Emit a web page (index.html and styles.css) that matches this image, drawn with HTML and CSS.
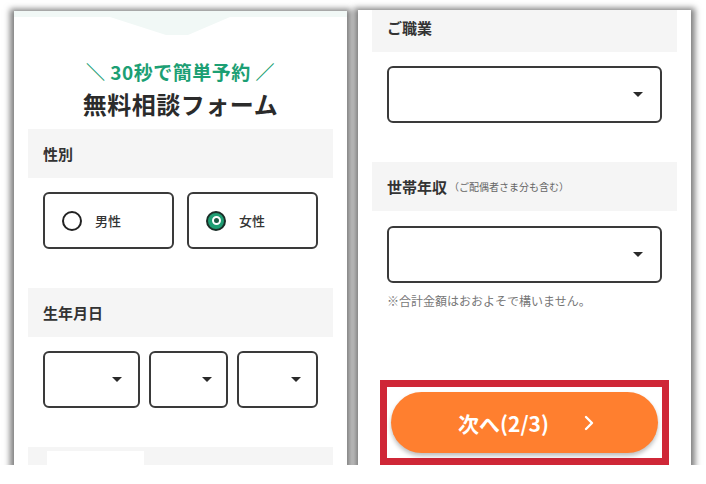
FILE: index.html
```html
<!DOCTYPE html>
<html lang="ja">
<head>
    <meta charset="UTF-8">
    <meta name="viewport" content="width=device-width, initial-scale=1.0">
    <title>無料相談フォーム</title>
    <link rel="stylesheet" href="styles.css">
</head>
<body>
    <div class="screens">
        <!-- Step 1 -->
        <section class="screen">
            <div class="screen-top"></div>
            <p class="form-lead">＼ 30秒で簡単予約 ／</p>
            <h1 class="form-title">無料相談フォーム</h1>

            <div class="field-label">性別</div>
            <div class="radio-row">
                <label class="radio-card">
                    <span class="radio"></span>
                    <span class="radio-text">男性</span>
                </label>
                <label class="radio-card">
                    <span class="radio checked"></span>
                    <span class="radio-text">女性</span>
                </label>
            </div>

            <div class="field-label gap-top">生年月日</div>
            <div class="select-row">
                <div class="select select-year"><span class="caret"></span></div>
                <div class="select select-month"><span class="caret"></span></div>
                <div class="select select-day"><span class="caret"></span></div>
            </div>

            <div class="field-label gap-top field-cut">
                <span class="cut-block"></span>
            </div>
        </section>

        <!-- Step 2 -->
        <section class="screen">
            <div class="field-label field-first">ご職業</div>
            <div class="select-wide">
                <div class="select"><span class="caret"></span></div>
            </div>

            <div class="field-label gap-top">世帯年収<small class="label-note">（ご配偶者さま分も含む）</small></div>
            <div class="select-wide select-wide-tight">
                <div class="select"><span class="caret"></span></div>
            </div>
            <p class="hint">※合計金額はおおよそで構いません。</p>

            <div class="highlight">
                <button class="next-btn" type="button">
                    <span>次へ(2/3)</span>
                    <svg class="next-icon" width="12" height="16" viewBox="0 0 12 16" aria-hidden="true">
                        <path d="M3 2 L9 8 L3 14" fill="none" stroke="#fff" stroke-width="2.4" stroke-linecap="round" stroke-linejoin="round"/>
                    </svg>
                </button>
            </div>
        </section>
    </div>
</body>
</html>
```

FILE: styles.css
```css
/* Base */
* {
    box-sizing: border-box;
    margin: 0;
    padding: 0;
}

body {
    background: #ffffff;
    font-family: "Noto Sans CJK JP", "Noto Sans", sans-serif;
    color: #333333;
}

.screens {
    display: flex;
    gap: 11px;
    padding: 10px 0 0 14px;
}

.screen {
    width: 333px;
    height: 455px;
    background: #ffffff;
    padding: 0 14px;
    overflow: hidden;
    box-shadow: 0 2px 6px 4px rgba(0, 0, 0, 0.5);
}

.screen:first-child {
    margin-top: 1px;
    height: 454px;
}

/* Header arrow of the previous block */
.screen-top {
    height: 24px;
    margin: 0 -14px;
    background: #f1f8f6;
    clip-path: polygon(0 0, 100% 0, 100% 6px, 216px 6px, 174px 24px, 152px 24px, 96px 6px, 0 6px);
}

.form-lead {
    margin-top: 25px;
    text-align: center;
    font-size: 19px;
    line-height: 24px;
    font-weight: 700;
    color: #1c9f74;
    letter-spacing: 0.5px;
}

.form-title {
    margin-top: 4px;
    text-align: center;
    font-size: 24px;
    line-height: 32px;
    font-weight: 700;
    color: #2b2b2b;
    letter-spacing: 0.5px;
}

/* Section labels */
.field-label {
    margin-top: 9px;
    height: 49px;
    padding-left: 15px;
    display: flex;
    align-items: center;
    background: #f5f5f5;
    font-size: 15px;
    font-weight: 700;
    color: #333333;
}

.field-label.gap-top {
    margin-top: 39px;
}

.field-first {
    margin-top: -7px;
}

.label-note {
    margin-left: 2px;
    font-size: 10px;
    font-weight: 400;
    color: #666666;
}

.field-cut {
    align-items: flex-start;
    padding-top: 4px;
}

.cut-block {
    display: block;
    width: 97px;
    height: 30px;
    background: #ffffff;
    margin-left: 4px;
}

/* Radio cards */
.radio-row {
    display: flex;
    gap: 13px;
    margin-top: 14px;
    padding: 0 15px;
}

.radio-card {
    flex: 1;
    height: 57px;
    border: 2px solid #3a3a3a;
    border-radius: 6px;
    display: flex;
    align-items: center;
    padding-left: 17px;
    gap: 13px;
}

.radio {
    width: 20px;
    height: 20px;
    border: 2.5px solid #222222;
    border-radius: 50%;
    display: flex;
    align-items: center;
    justify-content: center;
}

.radio.checked {
    background: #1f9e73;
    border-color: #1b2d27;
}

.radio.checked::after {
    content: "";
    width: 5px;
    height: 5px;
    border: 2px solid #ffffff;
    border-radius: 50%;
    background: #1b5a45;
}

.radio-text {
    font-size: 13px;
    font-weight: 500;
    color: #333333;
}

/* Selects */
.select-row {
    display: flex;
    gap: 9px;
    margin-top: 14px;
    padding: 0 15px;
}

.select {
    height: 57px;
    border: 2px solid #3a3a3a;
    border-radius: 6px;
    display: flex;
    align-items: center;
    justify-content: flex-end;
    padding-right: 17px;
    background: #ffffff;
}

.select-year {
    width: 97px;
    padding-right: 16px;
}

.select-month {
    width: 79px;
    padding-right: 14px;
}

.select-day {
    width: 81px;
    padding-right: 15px;
}

.caret {
    width: 0;
    height: 0;
    border-left: 5px solid transparent;
    border-right: 5px solid transparent;
    border-top: 5px solid #2a2a2a;
}

.select-wide {
    margin-top: 14px;
    padding: 0 15px;
}

.select-wide-tight {
    margin-top: 15px;
}

.select-wide .select {
    padding-right: 17px;
}

.hint {
    margin-top: 10px;
    padding-left: 15px;
    font-size: 12px;
    line-height: 16px;
    color: #777777;
}

/* Highlighted next button */
.highlight {
    margin: 71px 8px 0;
    border: 7px solid #cf2737;
    border-bottom-width: 8px;
    padding: 5px 4px 5px;
}

.next-btn {
    width: 100%;
    height: 61px;
    border: none;
    border-radius: 31px;
    background: #ff7f2f;
    box-shadow: 0 3px 4px rgba(0, 0, 0, 0.25);
    color: #ffffff;
    font-family: "Noto Sans CJK JP", "Noto Sans", sans-serif;
    font-size: 21px;
    font-weight: 700;
    display: flex;
    align-items: center;
    justify-content: center;
    gap: 34px;
    padding-left: 4px;
}

.next-icon {
    display: block;
}
```
